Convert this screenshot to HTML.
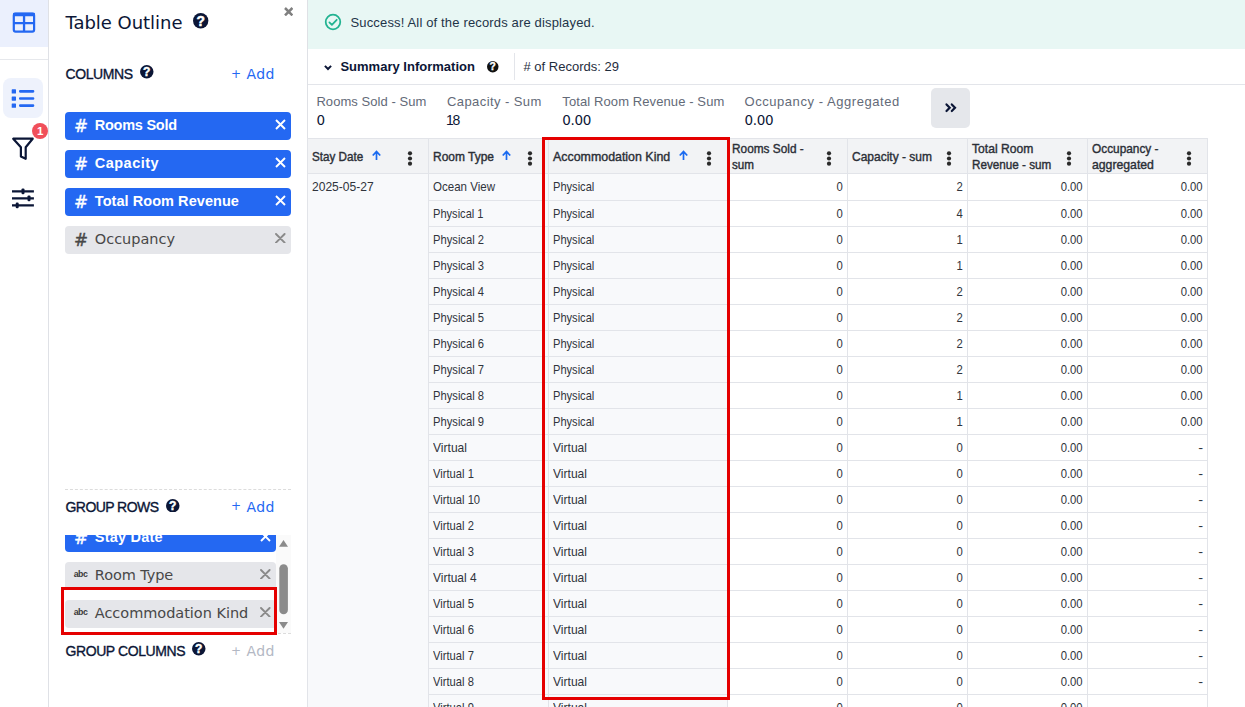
<!DOCTYPE html>
<html lang="en"><head><meta charset="utf-8"><title>Table Outline</title>
<style>
*{box-sizing:border-box;margin:0;padding:0}
html,body{width:1245px;height:707px;overflow:hidden;background:#fff}
body{position:relative;font-family:"Liberation Sans",sans-serif;color:#0b1636}
.abs{position:absolute}
.pp{font-family:"DejaVu Sans","Liberation Sans",sans-serif}
/* left rail */
#rail{position:absolute;left:0;top:0;width:49px;height:707px;background:#fff;border-right:1px solid #dfe1e6}
#railtop{position:absolute;left:0;top:0;width:48px;height:47px;background:#ebf0fd}
#railsep{position:absolute;left:0;top:59px;width:48px;height:1px;background:#e6e8ec}
#railsel{position:absolute;left:3px;top:78px;width:40px;height:40px;border-radius:8px;background:#eef2fc}
/* outline panel */
#panel{position:absolute;left:49px;top:0;width:259px;height:707px;background:#fff;border-right:1px solid #dfe1e6}
.pill{position:absolute;left:65px;width:226px;height:28px;border-radius:4px;background:#2468f2;color:#fff;font-weight:bold;font-size:14.5px;line-height:28px}
.pill.gr{background:#e5e6ea;color:#3f434d;font-weight:normal}
.pill .h{position:absolute;left:10px;top:0;font-weight:bold}
.pill .t{position:absolute;left:29px;top:0;white-space:nowrap}
.pill svg.x{position:absolute;right:6px;top:7px}
.sect{position:absolute;left:65px;font-size:14.5px;color:#0b1636;white-space:nowrap}
.add{position:absolute;left:231px;font-size:14.5px;color:#2468f2;white-space:nowrap}
/* main */
#banner{position:absolute;left:308px;top:0;width:937px;height:49px;background:#e8f7f4}
#banner .t{position:absolute;left:42px;top:14px;font-size:13px;color:#20303c;white-space:nowrap}
.lbl{position:absolute;font-size:13px;color:#5a6170;white-space:nowrap}
.val{position:absolute;font-size:14.5px;color:#0b1636;white-space:nowrap}
/* table */
.c{position:absolute;height:25px;line-height:25px;font-size:12.2px;color:#1d2433;white-space:nowrap;padding:0 4px}
.c.g{background:#f8f9fb}
.c.n{text-align:right;padding-right:8px;background:#fff}
.th{position:absolute;top:140px;height:33px;background:#f5f6f8;font-size:12.2px;font-weight:bold;color:#1d2433;padding-left:4px;line-height:15px}
.th span{position:absolute;left:4px;white-space:nowrap}
.hl{position:absolute;background:#e3e5ea}
.dots{position:absolute;width:4px;height:14px}
</style></head><body>

<!-- ===== LEFT RAIL ===== -->
<div id="rail">
 <div id="railtop"></div>
 <div id="railsep"></div>
 <div id="railsel"></div>
 <svg style="position:absolute;left:10px;top:10px" width="28" height="26" viewBox="10 10 28 26"><rect x="13.8" y="13.7" width="20.3" height="17.9" rx="1.8" fill="none" stroke="#2468f2" stroke-width="2.2"/><rect x="13" y="12.8" width="22" height="3.4" rx="1" fill="#2468f2"/><path d="M13.8 23.05H34.2M24.05 13.7V31.6" stroke="#2468f2" stroke-width="2.3"/></svg>
<svg style="position:absolute;left:10px;top:86px" width="28" height="24" viewBox="10 86 28 24"><g fill="#2468f2"><rect x="11.7" y="89.3" width="4.3" height="4.3" rx="0.6"/><rect x="11.7" y="96.4" width="4.3" height="4.3" rx="0.6"/><rect x="11.7" y="103.5" width="4.3" height="4.3" rx="0.6"/><rect x="19" y="90.1" width="15.3" height="2.6" rx="1.1"/><rect x="19" y="97.2" width="15.3" height="2.6" rx="1.1"/><rect x="19" y="104.3" width="15.3" height="2.6" rx="1.1"/></g></svg>
<svg style="position:absolute;left:8px;top:130px" width="32" height="34" viewBox="8 130 32 34"><path d="M13.2 138.7H32.7L25.7 147.2V158.8L20.9 156.4V147.2Z" fill="none" stroke="#0b1636" stroke-width="2.2" stroke-linejoin="round" stroke-linecap="round"/></svg>
<div style="position:absolute;left:32.2px;top:123.2px;width:15.6px;height:15.6px;border-radius:8px;background:#f04f5a"></div>
<div style="position:absolute;left:37px;top:120.92px;line-height:20px;white-space:nowrap;font-family:'Liberation Sans',sans-serif;font-size:11.5px;font-weight:bold;color:#fff;">1</div>
<svg style="position:absolute;left:10px;top:186px" width="28" height="24" viewBox="10 186 28 24"><g stroke="#0b1636" stroke-width="2.3" fill="none"><path d="M12 191.3H33.9M12 198.3H33.9M12 205.4H33.9"/></g><g fill="#0b1636"><rect x="21.5" y="188.4" width="3" height="5.8" rx="1.2"/><rect x="27.5" y="195.4" width="3" height="5.8" rx="1.2"/><rect x="15.7" y="202.5" width="3" height="5.8" rx="1.2"/></g></svg>
</div>

<!-- ===== OUTLINE PANEL ===== -->
<div id="panel"></div>
<div style="position:absolute;left:65.5px;top:12.56px;line-height:20px;white-space:nowrap;font-family:'DejaVu Sans','Liberation Sans',sans-serif;font-size:18px;color:#0b1636;letter-spacing:-0.033px;">Table Outline</div>
<svg style="position:absolute;left:193.20000000000002px;top:13.2px" width="15.4" height="15.4" viewBox="0 0 16 16"><circle cx="8" cy="8" r="8" fill="#0b1636"/><text x="8" y="13.1" text-anchor="middle" font-family="Liberation Sans,sans-serif" font-weight="bold" font-size="14.3" fill="#fff" stroke="#fff" stroke-width="0.5">?</text></svg>
<svg style="position:absolute;left:283.8px;top:6.8px" width="9.4" height="9.4" viewBox="-4.7 -4.7 9.4 9.4"><path d="M-3.7 -3.7L3.7 3.7M3.7 -3.7L-3.7 3.7" stroke="#808080" stroke-width="2.5" fill="none" stroke-linecap="butt"/></svg>
<div style="position:absolute;left:65.5px;top:64.15px;line-height:20px;white-space:nowrap;font-family:'Liberation Sans',sans-serif;font-size:14px;color:#0b1636;letter-spacing:-0.419px;-webkit-text-stroke:0.35px #0b1636;">COLUMNS</div>
<svg style="position:absolute;left:140.25px;top:65.25px" width="13.5" height="13.5" viewBox="0 0 16 16"><circle cx="8" cy="8" r="8" fill="#0b1636"/><text x="8" y="13.1" text-anchor="middle" font-family="Liberation Sans,sans-serif" font-weight="bold" font-size="14.3" fill="#fff" stroke="#fff" stroke-width="0.5">?</text></svg>
<div style="position:absolute;left:231px;top:63.54px;line-height:20px;white-space:nowrap;font-family:'DejaVu Sans','Liberation Sans',sans-serif;font-size:12px;color:#2468f2;">+</div>
<div style="position:absolute;left:246.6px;top:64.15px;line-height:20px;white-space:nowrap;font-family:'DejaVu Sans','Liberation Sans',sans-serif;font-size:14px;color:#2468f2;letter-spacing:0.345px;">Add</div>
<div style="position:absolute;left:65px;top:112px;width:226px;height:28px;border-radius:4px;background:#2468f2"></div><div style="position:absolute;left:73.9px;top:115.78px;line-height:20px;white-space:nowrap;font-family:'DejaVu Sans','Liberation Sans',sans-serif;font-size:16.8px;color:#fff;-webkit-text-stroke:0.4px #fff;">#</div><div style="position:absolute;left:94.8px;top:115.18px;line-height:20px;white-space:nowrap;font-family:'Liberation Sans',sans-serif;font-size:14.5px;font-weight:bold;color:#fff;letter-spacing:-0.255px;">Rooms Sold</div><svg style="position:absolute;left:274.8px;top:118.8px" width="11" height="11" viewBox="-5.5 -5.5 11 11"><path d="M-4.5 -4.5L4.5 4.5M4.5 -4.5L-4.5 4.5" stroke="#fff" stroke-width="1.9" fill="none" stroke-linecap="butt"/></svg>
<div style="position:absolute;left:65px;top:150px;width:226px;height:28px;border-radius:4px;background:#2468f2"></div><div style="position:absolute;left:73.9px;top:153.78px;line-height:20px;white-space:nowrap;font-family:'DejaVu Sans','Liberation Sans',sans-serif;font-size:16.8px;color:#fff;-webkit-text-stroke:0.4px #fff;">#</div><div style="position:absolute;left:94.8px;top:153.18px;line-height:20px;white-space:nowrap;font-family:'Liberation Sans',sans-serif;font-size:14.5px;font-weight:bold;color:#fff;letter-spacing:0.478px;">Capacity</div><svg style="position:absolute;left:274.8px;top:156.8px" width="11" height="11" viewBox="-5.5 -5.5 11 11"><path d="M-4.5 -4.5L4.5 4.5M4.5 -4.5L-4.5 4.5" stroke="#fff" stroke-width="1.9" fill="none" stroke-linecap="butt"/></svg>
<div style="position:absolute;left:65px;top:188px;width:226px;height:28px;border-radius:4px;background:#2468f2"></div><div style="position:absolute;left:73.9px;top:191.78px;line-height:20px;white-space:nowrap;font-family:'DejaVu Sans','Liberation Sans',sans-serif;font-size:16.8px;color:#fff;-webkit-text-stroke:0.4px #fff;">#</div><div style="position:absolute;left:94.8px;top:191.18px;line-height:20px;white-space:nowrap;font-family:'Liberation Sans',sans-serif;font-size:14.5px;font-weight:bold;color:#fff;letter-spacing:0.056px;">Total Room Revenue</div><svg style="position:absolute;left:274.8px;top:194.8px" width="11" height="11" viewBox="-5.5 -5.5 11 11"><path d="M-4.5 -4.5L4.5 4.5M4.5 -4.5L-4.5 4.5" stroke="#fff" stroke-width="1.9" fill="none" stroke-linecap="butt"/></svg>
<div style="position:absolute;left:65px;top:226px;width:226px;height:28px;border-radius:4px;background:#e5e6ea"></div><div style="position:absolute;left:73.9px;top:229.78px;line-height:20px;white-space:nowrap;font-family:'DejaVu Sans','Liberation Sans',sans-serif;font-size:16.8px;color:#484848;-webkit-text-stroke:0.4px #484848;">#</div><div style="position:absolute;left:94.8px;top:229.18px;line-height:20px;white-space:nowrap;font-family:'DejaVu Sans','Liberation Sans',sans-serif;font-size:14.5px;color:#484848;letter-spacing:-0.011px;">Occupancy</div><svg style="position:absolute;left:275.0px;top:232.6px" width="10.6" height="10.6" viewBox="-5.3 -5.3 10.6 10.6"><path d="M-4.3 -4.3L4.3 4.3M4.3 -4.3L-4.3 4.3" stroke="#8a8a8a" stroke-width="1.9" fill="none" stroke-linecap="round"/></svg>
<div style="position:absolute;left:65px;top:489px;width:226px;height:0;border-top:1px dashed #dcdcdc"></div>
<div style="position:absolute;left:65px;top:633px;width:226px;height:0;border-top:1px dashed #dcdcdc"></div>
<div style="position:absolute;left:65.5px;top:496.85px;line-height:20px;white-space:nowrap;font-family:'Liberation Sans',sans-serif;font-size:14px;color:#0b1636;letter-spacing:-0.559px;-webkit-text-stroke:0.35px #0b1636;">GROUP ROWS</div>
<svg style="position:absolute;left:166.25px;top:498.55px" width="13.5" height="13.5" viewBox="0 0 16 16"><circle cx="8" cy="8" r="8" fill="#0b1636"/><text x="8" y="13.1" text-anchor="middle" font-family="Liberation Sans,sans-serif" font-weight="bold" font-size="14.3" fill="#fff" stroke="#fff" stroke-width="0.5">?</text></svg>
<div style="position:absolute;left:231px;top:496.24px;line-height:20px;white-space:nowrap;font-family:'DejaVu Sans','Liberation Sans',sans-serif;font-size:12px;color:#2468f2;">+</div>
<div style="position:absolute;left:246.6px;top:496.85px;line-height:20px;white-space:nowrap;font-family:'DejaVu Sans','Liberation Sans',sans-serif;font-size:14px;color:#2468f2;letter-spacing:0.345px;">Add</div>
<div style="position:absolute;left:0;top:535px;width:300px;height:98px;overflow:hidden"><div style="position:absolute;left:0;top:-535px">
<div style="position:absolute;left:65px;top:524px;width:211px;height:28px;border-radius:4px;background:#2468f2"></div><div style="position:absolute;left:73.9px;top:527.78px;line-height:20px;white-space:nowrap;font-family:'DejaVu Sans','Liberation Sans',sans-serif;font-size:16.8px;color:#fff;-webkit-text-stroke:0.4px #fff;">#</div><div style="position:absolute;left:94.8px;top:527.18px;line-height:20px;white-space:nowrap;font-family:'Liberation Sans',sans-serif;font-size:14.5px;font-weight:bold;color:#fff;letter-spacing:0.213px;">Stay Date</div><svg style="position:absolute;left:259.8px;top:530.8px" width="11" height="11" viewBox="-5.5 -5.5 11 11"><path d="M-4.5 -4.5L4.5 4.5M4.5 -4.5L-4.5 4.5" stroke="#fff" stroke-width="1.9" fill="none" stroke-linecap="butt"/></svg>
<div style="position:absolute;left:65px;top:562px;width:211px;height:28px;border-radius:4px;background:#e5e6ea"></div><div style="position:absolute;left:73.7px;top:564.35px;line-height:20px;white-space:nowrap;font-family:'Liberation Sans',sans-serif;font-size:8.8px;font-weight:bold;color:#3a3a3a;letter-spacing:-0.486px;">abc</div><div style="position:absolute;left:94.8px;top:565.18px;line-height:20px;white-space:nowrap;font-family:'DejaVu Sans','Liberation Sans',sans-serif;font-size:14.5px;color:#484848;letter-spacing:-0.09px;">Room Type</div><svg style="position:absolute;left:260.0px;top:568.6px" width="10.6" height="10.6" viewBox="-5.3 -5.3 10.6 10.6"><path d="M-4.3 -4.3L4.3 4.3M4.3 -4.3L-4.3 4.3" stroke="#8a8a8a" stroke-width="1.9" fill="none" stroke-linecap="round"/></svg>
</div></div>
<div style="position:absolute;left:276px;top:535px;width:15px;height:98px;background:#fafafa"></div>
<svg style="position:absolute;left:276px;top:535px" width="15" height="98" viewBox="0 0 15 98"><path d="M3 11.8L7.5 5L12 11.8Z" fill="#8b8b8b"/><path d="M3 87L7.5 93.8L12 87Z" fill="#8b8b8b"/><rect x="3.3" y="29.3" width="8.6" height="50" rx="4.3" fill="#8b8b8b"/></svg>
<div style="position:absolute;left:61px;top:587px;width:216px;height:47.5px;border:3px solid #e50000;background:#fff"></div>
<div style="position:absolute;left:0;top:590px;width:274px;height:41.5px;overflow:hidden"><div style="position:absolute;left:0;top:-590px">
<div style="position:absolute;left:65px;top:600px;width:211px;height:28px;border-radius:4px;background:#e5e6ea"></div><div style="position:absolute;left:73.7px;top:602.35px;line-height:20px;white-space:nowrap;font-family:'Liberation Sans',sans-serif;font-size:8.8px;font-weight:bold;color:#3a3a3a;letter-spacing:-0.486px;">abc</div><div style="position:absolute;left:94.8px;top:603.18px;line-height:20px;white-space:nowrap;font-family:'DejaVu Sans','Liberation Sans',sans-serif;font-size:14.5px;color:#484848;letter-spacing:-0.03px;">Accommodation Kind</div><svg style="position:absolute;left:260.0px;top:606.6px" width="10.6" height="10.6" viewBox="-5.3 -5.3 10.6 10.6"><path d="M-4.3 -4.3L4.3 4.3M4.3 -4.3L-4.3 4.3" stroke="#8a8a8a" stroke-width="1.9" fill="none" stroke-linecap="round"/></svg>
</div></div>
<div style="position:absolute;left:65.5px;top:641.15px;line-height:20px;white-space:nowrap;font-family:'Liberation Sans',sans-serif;font-size:14px;color:#0b1636;letter-spacing:-0.415px;-webkit-text-stroke:0.35px #0b1636;">GROUP COLUMNS</div>
<svg style="position:absolute;left:192.25px;top:642.15px" width="13.5" height="13.5" viewBox="0 0 16 16"><circle cx="8" cy="8" r="8" fill="#0b1636"/><text x="8" y="13.1" text-anchor="middle" font-family="Liberation Sans,sans-serif" font-weight="bold" font-size="14.3" fill="#fff" stroke="#fff" stroke-width="0.5">?</text></svg>
<div style="position:absolute;left:231px;top:640.54px;line-height:20px;white-space:nowrap;font-family:'DejaVu Sans','Liberation Sans',sans-serif;font-size:12px;color:#b3b8c4;">+</div>
<div style="position:absolute;left:246.6px;top:641.15px;line-height:20px;white-space:nowrap;font-family:'DejaVu Sans','Liberation Sans',sans-serif;font-size:14px;color:#b3b8c4;letter-spacing:0.345px;">Add</div>

<!-- ===== MAIN ===== -->
<div id="banner"></div>
<svg style="position:absolute;left:324px;top:12.5px" width="18" height="18" viewBox="0 0 18 18"><circle cx="9" cy="9" r="7.3" fill="none" stroke="#22b391" stroke-width="1.75"/><path d="M5.4 9.4L7.9 11.9L12.7 6.8" fill="none" stroke="#22b391" stroke-width="1.75" stroke-linecap="round" stroke-linejoin="round"/></svg>
<div style="position:absolute;left:350.5px;top:12.80px;line-height:20px;white-space:nowrap;font-family:'Liberation Sans',sans-serif;font-size:13px;color:#1e3448;letter-spacing:0.153px;">Success! All of the records are displayed.</div>
<svg style="position:absolute;left:322.6px;top:62.5px" width="10" height="9" viewBox="0 0 10 9"><path d="M1.9 2.9L5 6L8.1 2.9" fill="none" stroke="#0b1636" stroke-width="2"/></svg>
<div style="position:absolute;left:340.4px;top:57.10px;line-height:20px;white-space:nowrap;font-family:'Liberation Sans',sans-serif;font-size:13px;font-weight:bold;color:#0b1636;letter-spacing:0.008px;">Summary Information</div>
<svg style="position:absolute;left:487.45px;top:61.45px" width="11.5" height="11.5" viewBox="0 0 16 16"><circle cx="8" cy="8" r="8" fill="#111"/><text x="8" y="13.1" text-anchor="middle" font-family="Liberation Sans,sans-serif" font-weight="bold" font-size="14.3" fill="#fff" stroke="#fff" stroke-width="0.5">?</text></svg>
<div style="position:absolute;left:514px;top:53px;width:1px;height:27px;background:#e3e5ea"></div>
<div style="position:absolute;left:523.5px;top:57.10px;line-height:20px;white-space:nowrap;font-family:'Liberation Sans',sans-serif;font-size:13px;color:#1f2d3d;letter-spacing:0.014px;"># of Records: 29</div>
<div style="position:absolute;left:308px;top:84px;width:937px;height:1px;background:#e3e5ea"></div>
<div style="position:absolute;left:316.4px;top:92.10px;line-height:20px;white-space:nowrap;font-family:'Liberation Sans',sans-serif;font-size:13px;color:#636a78;letter-spacing:0.06px;">Rooms Sold - Sum</div>
<div style="position:absolute;left:316.4px;top:109.92px;line-height:20px;white-space:nowrap;font-family:'DejaVu Sans','Liberation Sans',sans-serif;font-size:13.5px;color:#0b1636;">0</div>
<div style="position:absolute;left:447px;top:92.10px;line-height:20px;white-space:nowrap;font-family:'Liberation Sans',sans-serif;font-size:13px;color:#636a78;letter-spacing:0.417px;">Capacity - Sum</div>
<div style="position:absolute;left:446px;top:109.75px;line-height:20px;white-space:nowrap;font-family:'Liberation Sans',sans-serif;font-size:14px;color:#0b1636;letter-spacing:-1.2px;">18</div>
<div style="position:absolute;left:562.3px;top:92.10px;line-height:20px;white-space:nowrap;font-family:'Liberation Sans',sans-serif;font-size:13px;color:#636a78;letter-spacing:0.101px;">Total Room Revenue - Sum</div>
<div style="position:absolute;left:562.3px;top:109.92px;line-height:20px;white-space:nowrap;font-family:'DejaVu Sans','Liberation Sans',sans-serif;font-size:13.5px;color:#0b1636;letter-spacing:-0.354px;">0.00</div>
<div style="position:absolute;left:744.5px;top:92.10px;line-height:20px;white-space:nowrap;font-family:'Liberation Sans',sans-serif;font-size:13px;color:#636a78;letter-spacing:0.553px;">Occupancy - Aggregated</div>
<div style="position:absolute;left:744.5px;top:109.92px;line-height:20px;white-space:nowrap;font-family:'DejaVu Sans','Liberation Sans',sans-serif;font-size:13.5px;color:#0b1636;letter-spacing:-0.354px;">0.00</div>
<div style="position:absolute;left:931px;top:88px;width:39px;height:40px;border-radius:5px;background:#e5e7eb"></div>
<svg style="position:absolute;left:943px;top:101px" width="16" height="14" viewBox="943 101 16 14"><path d="M946.5 104.4L949.7 107.7L946.5 111M951.8 104.4L955 107.7L951.8 111" fill="none" stroke="#0b1636" stroke-width="2.2" stroke-linecap="round" stroke-linejoin="miter"/></svg>

<!-- ===== TABLE ===== -->
<div style="position:absolute;left:307px;top:138px;width:901px;height:35px;background:#f2f3f5"></div>
<div style="position:absolute;left:307px;top:173px;width:420px;height:534px;background:#f8f9fb"></div>
<div style="position:absolute;left:307px;top:138px;width:901px;height:1px;background:#e2e4e9"></div>
<div style="position:absolute;left:307px;top:173px;width:901px;height:1px;background:#e2e4e9"></div>
<div style="position:absolute;left:428px;top:200px;width:780px;height:1px;background:#e2e4e9"></div>
<div style="position:absolute;left:428px;top:226px;width:780px;height:1px;background:#e2e4e9"></div>
<div style="position:absolute;left:428px;top:252px;width:780px;height:1px;background:#e2e4e9"></div>
<div style="position:absolute;left:428px;top:278px;width:780px;height:1px;background:#e2e4e9"></div>
<div style="position:absolute;left:428px;top:304px;width:780px;height:1px;background:#e2e4e9"></div>
<div style="position:absolute;left:428px;top:330px;width:780px;height:1px;background:#e2e4e9"></div>
<div style="position:absolute;left:428px;top:356px;width:780px;height:1px;background:#e2e4e9"></div>
<div style="position:absolute;left:428px;top:382px;width:780px;height:1px;background:#e2e4e9"></div>
<div style="position:absolute;left:428px;top:408px;width:780px;height:1px;background:#e2e4e9"></div>
<div style="position:absolute;left:428px;top:434px;width:780px;height:1px;background:#e2e4e9"></div>
<div style="position:absolute;left:428px;top:460px;width:780px;height:1px;background:#e2e4e9"></div>
<div style="position:absolute;left:428px;top:486px;width:780px;height:1px;background:#e2e4e9"></div>
<div style="position:absolute;left:428px;top:512px;width:780px;height:1px;background:#e2e4e9"></div>
<div style="position:absolute;left:428px;top:538px;width:780px;height:1px;background:#e2e4e9"></div>
<div style="position:absolute;left:428px;top:564px;width:780px;height:1px;background:#e2e4e9"></div>
<div style="position:absolute;left:428px;top:590px;width:780px;height:1px;background:#e2e4e9"></div>
<div style="position:absolute;left:428px;top:616px;width:780px;height:1px;background:#e2e4e9"></div>
<div style="position:absolute;left:428px;top:642px;width:780px;height:1px;background:#e2e4e9"></div>
<div style="position:absolute;left:428px;top:668px;width:780px;height:1px;background:#e2e4e9"></div>
<div style="position:absolute;left:428px;top:694px;width:780px;height:1px;background:#e2e4e9"></div>
<div style="position:absolute;left:307px;top:138px;width:1px;height:569px;background:#e2e4e9"></div>
<div style="position:absolute;left:428px;top:138px;width:1px;height:569px;background:#e2e4e9"></div>
<div style="position:absolute;left:548px;top:138px;width:1px;height:569px;background:#e2e4e9"></div>
<div style="position:absolute;left:727px;top:138px;width:1px;height:569px;background:#e2e4e9"></div>
<div style="position:absolute;left:847px;top:138px;width:1px;height:569px;background:#e2e4e9"></div>
<div style="position:absolute;left:967px;top:138px;width:1px;height:569px;background:#e2e4e9"></div>
<div style="position:absolute;left:1087px;top:138px;width:1px;height:569px;background:#e2e4e9"></div>
<div style="position:absolute;left:1207px;top:138px;width:1px;height:569px;background:#e2e4e9"></div>
<div style="position:absolute;left:312.2px;top:146.79px;line-height:20px;white-space:nowrap;font-family:'Liberation Sans',sans-serif;font-size:12.15px;color:#2b2f37;transform:scaleX(0.9604);transform-origin:left center;-webkit-text-stroke:0.38px #2b2f37;">Stay Date</div>
<svg style="position:absolute;left:371.2px;top:150.0px" width="11" height="11" viewBox="-5.5 -5.5 11 11"><path d="M0 4.4V-3.9M-3.75 0L0 -3.9L3.75 0" fill="none" stroke="#1a6af0" stroke-width="1.7"/></svg>
<svg style="position:absolute;left:407px;top:150.2px" width="6" height="17" viewBox="0 0 6 17"><circle cx="3" cy="3.3" r="2.1" fill="#2a2a2a"/><circle cx="3" cy="8.5" r="2.1" fill="#2a2a2a"/><circle cx="3" cy="13.7" r="2.1" fill="#2a2a2a"/></svg>
<div style="position:absolute;left:432.9px;top:146.79px;line-height:20px;white-space:nowrap;font-family:'Liberation Sans',sans-serif;font-size:12.15px;color:#2b2f37;transform:scaleX(0.9861);transform-origin:left center;-webkit-text-stroke:0.38px #2b2f37;">Room Type</div>
<svg style="position:absolute;left:501.3px;top:150.0px" width="11" height="11" viewBox="-5.5 -5.5 11 11"><path d="M0 4.4V-3.9M-3.75 0L0 -3.9L3.75 0" fill="none" stroke="#1a6af0" stroke-width="1.7"/></svg>
<svg style="position:absolute;left:526.9px;top:150.2px" width="6" height="17" viewBox="0 0 6 17"><circle cx="3" cy="3.3" r="2.1" fill="#2a2a2a"/><circle cx="3" cy="8.5" r="2.1" fill="#2a2a2a"/><circle cx="3" cy="13.7" r="2.1" fill="#2a2a2a"/></svg>
<div style="position:absolute;left:552.9px;top:146.79px;line-height:20px;white-space:nowrap;font-family:'Liberation Sans',sans-serif;font-size:12.15px;color:#2b2f37;transform:scaleX(1.0215);transform-origin:left center;-webkit-text-stroke:0.38px #2b2f37;">Accommodation Kind</div>
<svg style="position:absolute;left:678.0px;top:150.0px" width="11" height="11" viewBox="-5.5 -5.5 11 11"><path d="M0 4.4V-3.9M-3.75 0L0 -3.9L3.75 0" fill="none" stroke="#1a6af0" stroke-width="1.7"/></svg>
<svg style="position:absolute;left:705.7px;top:150.2px" width="6" height="17" viewBox="0 0 6 17"><circle cx="3" cy="3.3" r="2.1" fill="#2a2a2a"/><circle cx="3" cy="8.5" r="2.1" fill="#2a2a2a"/><circle cx="3" cy="13.7" r="2.1" fill="#2a2a2a"/></svg>
<div style="position:absolute;left:732px;top:139.19px;line-height:20px;white-space:nowrap;font-family:'Liberation Sans',sans-serif;font-size:12.15px;color:#2b2f37;transform:scaleX(0.9749);transform-origin:left center;-webkit-text-stroke:0.38px #2b2f37;">Rooms Sold -</div>
<div style="position:absolute;left:732px;top:154.99px;line-height:20px;white-space:nowrap;font-family:'Liberation Sans',sans-serif;font-size:12.15px;color:#2b2f37;transform:scaleX(0.9591);transform-origin:left center;-webkit-text-stroke:0.38px #2b2f37;">sum</div>
<svg style="position:absolute;left:825.8px;top:150.2px" width="6" height="17" viewBox="0 0 6 17"><circle cx="3" cy="3.3" r="2.1" fill="#2a2a2a"/><circle cx="3" cy="8.5" r="2.1" fill="#2a2a2a"/><circle cx="3" cy="13.7" r="2.1" fill="#2a2a2a"/></svg>
<div style="position:absolute;left:851.7px;top:146.79px;line-height:20px;white-space:nowrap;font-family:'Liberation Sans',sans-serif;font-size:12.15px;color:#2b2f37;transform:scaleX(0.988);transform-origin:left center;-webkit-text-stroke:0.38px #2b2f37;">Capacity - sum</div>
<svg style="position:absolute;left:946.3px;top:150.2px" width="6" height="17" viewBox="0 0 6 17"><circle cx="3" cy="3.3" r="2.1" fill="#2a2a2a"/><circle cx="3" cy="8.5" r="2.1" fill="#2a2a2a"/><circle cx="3" cy="13.7" r="2.1" fill="#2a2a2a"/></svg>
<div style="position:absolute;left:972px;top:139.19px;line-height:20px;white-space:nowrap;font-family:'Liberation Sans',sans-serif;font-size:12.15px;color:#2b2f37;transform:scaleX(0.9983);transform-origin:left center;-webkit-text-stroke:0.38px #2b2f37;">Total Room</div>
<div style="position:absolute;left:972px;top:154.99px;line-height:20px;white-space:nowrap;font-family:'Liberation Sans',sans-serif;font-size:12.15px;color:#2b2f37;transform:scaleX(0.9632);transform-origin:left center;-webkit-text-stroke:0.38px #2b2f37;">Revenue - sum</div>
<svg style="position:absolute;left:1065.8px;top:150.2px" width="6" height="17" viewBox="0 0 6 17"><circle cx="3" cy="3.3" r="2.1" fill="#2a2a2a"/><circle cx="3" cy="8.5" r="2.1" fill="#2a2a2a"/><circle cx="3" cy="13.7" r="2.1" fill="#2a2a2a"/></svg>
<div style="position:absolute;left:1091.9px;top:139.19px;line-height:20px;white-space:nowrap;font-family:'Liberation Sans',sans-serif;font-size:12.15px;color:#2b2f37;transform:scaleX(0.9757);transform-origin:left center;-webkit-text-stroke:0.38px #2b2f37;">Occupancy -</div>
<div style="position:absolute;left:1091.9px;top:154.99px;line-height:20px;white-space:nowrap;font-family:'Liberation Sans',sans-serif;font-size:12.15px;color:#2b2f37;transform:scaleX(1.0075);transform-origin:left center;-webkit-text-stroke:0.38px #2b2f37;">aggregated</div>
<svg style="position:absolute;left:1186.3px;top:150.2px" width="6" height="17" viewBox="0 0 6 17"><circle cx="3" cy="3.3" r="2.1" fill="#2a2a2a"/><circle cx="3" cy="8.5" r="2.1" fill="#2a2a2a"/><circle cx="3" cy="13.7" r="2.1" fill="#2a2a2a"/></svg>
<div style="position:absolute;left:312.2px;top:176.79px;line-height:20px;white-space:nowrap;font-family:'Liberation Sans',sans-serif;font-size:12.15px;color:#30343c;transform:scaleX(0.9934);transform-origin:left center;">2025-05-27</div>
<div style="position:absolute;left:433px;top:176.79px;line-height:20px;white-space:nowrap;font-family:'Liberation Sans',sans-serif;font-size:12.15px;color:#30343c;transform:scaleX(0.9502);transform-origin:left center;">Ocean View</div>
<div style="position:absolute;left:552.9px;top:176.79px;line-height:20px;white-space:nowrap;font-family:'Liberation Sans',sans-serif;font-size:12.15px;color:#30343c;transform:scaleX(0.9133);transform-origin:left center;">Physical</div>
<div style="position:absolute;right:402.29999999999995px;top:176.79px;line-height:20px;white-space:nowrap;font-family:'Liberation Sans',sans-serif;font-size:12.15px;color:#30343c;transform:scaleX(0.93);transform-origin:right center;">0</div>
<div style="position:absolute;right:282.29999999999995px;top:176.79px;line-height:20px;white-space:nowrap;font-family:'Liberation Sans',sans-serif;font-size:12.15px;color:#30343c;transform:scaleX(0.93);transform-origin:right center;">2</div>
<div style="position:absolute;right:162.29999999999995px;top:176.79px;line-height:20px;white-space:nowrap;font-family:'Liberation Sans',sans-serif;font-size:12.15px;color:#30343c;transform:scaleX(0.93);transform-origin:right center;">0.00</div>
<div style="position:absolute;right:42.299999999999955px;top:176.79px;line-height:20px;white-space:nowrap;font-family:'Liberation Sans',sans-serif;font-size:12.15px;color:#30343c;transform:scaleX(0.93);transform-origin:right center;">0.00</div>
<div style="position:absolute;left:433px;top:203.79px;line-height:20px;white-space:nowrap;font-family:'Liberation Sans',sans-serif;font-size:12.15px;color:#30343c;transform:scaleX(0.9125);transform-origin:left center;">Physical 1</div>
<div style="position:absolute;left:552.9px;top:203.79px;line-height:20px;white-space:nowrap;font-family:'Liberation Sans',sans-serif;font-size:12.15px;color:#30343c;transform:scaleX(0.9133);transform-origin:left center;">Physical</div>
<div style="position:absolute;right:402.29999999999995px;top:203.79px;line-height:20px;white-space:nowrap;font-family:'Liberation Sans',sans-serif;font-size:12.15px;color:#30343c;transform:scaleX(0.93);transform-origin:right center;">0</div>
<div style="position:absolute;right:282.29999999999995px;top:203.79px;line-height:20px;white-space:nowrap;font-family:'Liberation Sans',sans-serif;font-size:12.15px;color:#30343c;transform:scaleX(0.93);transform-origin:right center;">4</div>
<div style="position:absolute;right:162.29999999999995px;top:203.79px;line-height:20px;white-space:nowrap;font-family:'Liberation Sans',sans-serif;font-size:12.15px;color:#30343c;transform:scaleX(0.93);transform-origin:right center;">0.00</div>
<div style="position:absolute;right:42.299999999999955px;top:203.79px;line-height:20px;white-space:nowrap;font-family:'Liberation Sans',sans-serif;font-size:12.15px;color:#30343c;transform:scaleX(0.93);transform-origin:right center;">0.00</div>
<div style="position:absolute;left:433px;top:229.79px;line-height:20px;white-space:nowrap;font-family:'Liberation Sans',sans-serif;font-size:12.15px;color:#30343c;transform:scaleX(0.922);transform-origin:left center;">Physical 2</div>
<div style="position:absolute;left:552.9px;top:229.79px;line-height:20px;white-space:nowrap;font-family:'Liberation Sans',sans-serif;font-size:12.15px;color:#30343c;transform:scaleX(0.9133);transform-origin:left center;">Physical</div>
<div style="position:absolute;right:402.29999999999995px;top:229.79px;line-height:20px;white-space:nowrap;font-family:'Liberation Sans',sans-serif;font-size:12.15px;color:#30343c;transform:scaleX(0.93);transform-origin:right center;">0</div>
<div style="position:absolute;right:282.29999999999995px;top:229.79px;line-height:20px;white-space:nowrap;font-family:'Liberation Sans',sans-serif;font-size:12.15px;color:#30343c;transform:scaleX(0.93);transform-origin:right center;">1</div>
<div style="position:absolute;right:162.29999999999995px;top:229.79px;line-height:20px;white-space:nowrap;font-family:'Liberation Sans',sans-serif;font-size:12.15px;color:#30343c;transform:scaleX(0.93);transform-origin:right center;">0.00</div>
<div style="position:absolute;right:42.299999999999955px;top:229.79px;line-height:20px;white-space:nowrap;font-family:'Liberation Sans',sans-serif;font-size:12.15px;color:#30343c;transform:scaleX(0.93);transform-origin:right center;">0.00</div>
<div style="position:absolute;left:433px;top:255.79px;line-height:20px;white-space:nowrap;font-family:'Liberation Sans',sans-serif;font-size:12.15px;color:#30343c;transform:scaleX(0.922);transform-origin:left center;">Physical 3</div>
<div style="position:absolute;left:552.9px;top:255.79px;line-height:20px;white-space:nowrap;font-family:'Liberation Sans',sans-serif;font-size:12.15px;color:#30343c;transform:scaleX(0.9133);transform-origin:left center;">Physical</div>
<div style="position:absolute;right:402.29999999999995px;top:255.79px;line-height:20px;white-space:nowrap;font-family:'Liberation Sans',sans-serif;font-size:12.15px;color:#30343c;transform:scaleX(0.93);transform-origin:right center;">0</div>
<div style="position:absolute;right:282.29999999999995px;top:255.79px;line-height:20px;white-space:nowrap;font-family:'Liberation Sans',sans-serif;font-size:12.15px;color:#30343c;transform:scaleX(0.93);transform-origin:right center;">1</div>
<div style="position:absolute;right:162.29999999999995px;top:255.79px;line-height:20px;white-space:nowrap;font-family:'Liberation Sans',sans-serif;font-size:12.15px;color:#30343c;transform:scaleX(0.93);transform-origin:right center;">0.00</div>
<div style="position:absolute;right:42.299999999999955px;top:255.79px;line-height:20px;white-space:nowrap;font-family:'Liberation Sans',sans-serif;font-size:12.15px;color:#30343c;transform:scaleX(0.93);transform-origin:right center;">0.00</div>
<div style="position:absolute;left:433px;top:281.79px;line-height:20px;white-space:nowrap;font-family:'Liberation Sans',sans-serif;font-size:12.15px;color:#30343c;transform:scaleX(0.922);transform-origin:left center;">Physical 4</div>
<div style="position:absolute;left:552.9px;top:281.79px;line-height:20px;white-space:nowrap;font-family:'Liberation Sans',sans-serif;font-size:12.15px;color:#30343c;transform:scaleX(0.9133);transform-origin:left center;">Physical</div>
<div style="position:absolute;right:402.29999999999995px;top:281.79px;line-height:20px;white-space:nowrap;font-family:'Liberation Sans',sans-serif;font-size:12.15px;color:#30343c;transform:scaleX(0.93);transform-origin:right center;">0</div>
<div style="position:absolute;right:282.29999999999995px;top:281.79px;line-height:20px;white-space:nowrap;font-family:'Liberation Sans',sans-serif;font-size:12.15px;color:#30343c;transform:scaleX(0.93);transform-origin:right center;">2</div>
<div style="position:absolute;right:162.29999999999995px;top:281.79px;line-height:20px;white-space:nowrap;font-family:'Liberation Sans',sans-serif;font-size:12.15px;color:#30343c;transform:scaleX(0.93);transform-origin:right center;">0.00</div>
<div style="position:absolute;right:42.299999999999955px;top:281.79px;line-height:20px;white-space:nowrap;font-family:'Liberation Sans',sans-serif;font-size:12.15px;color:#30343c;transform:scaleX(0.93);transform-origin:right center;">0.00</div>
<div style="position:absolute;left:433px;top:307.79px;line-height:20px;white-space:nowrap;font-family:'Liberation Sans',sans-serif;font-size:12.15px;color:#30343c;transform:scaleX(0.922);transform-origin:left center;">Physical 5</div>
<div style="position:absolute;left:552.9px;top:307.79px;line-height:20px;white-space:nowrap;font-family:'Liberation Sans',sans-serif;font-size:12.15px;color:#30343c;transform:scaleX(0.9133);transform-origin:left center;">Physical</div>
<div style="position:absolute;right:402.29999999999995px;top:307.79px;line-height:20px;white-space:nowrap;font-family:'Liberation Sans',sans-serif;font-size:12.15px;color:#30343c;transform:scaleX(0.93);transform-origin:right center;">0</div>
<div style="position:absolute;right:282.29999999999995px;top:307.79px;line-height:20px;white-space:nowrap;font-family:'Liberation Sans',sans-serif;font-size:12.15px;color:#30343c;transform:scaleX(0.93);transform-origin:right center;">2</div>
<div style="position:absolute;right:162.29999999999995px;top:307.79px;line-height:20px;white-space:nowrap;font-family:'Liberation Sans',sans-serif;font-size:12.15px;color:#30343c;transform:scaleX(0.93);transform-origin:right center;">0.00</div>
<div style="position:absolute;right:42.299999999999955px;top:307.79px;line-height:20px;white-space:nowrap;font-family:'Liberation Sans',sans-serif;font-size:12.15px;color:#30343c;transform:scaleX(0.93);transform-origin:right center;">0.00</div>
<div style="position:absolute;left:433px;top:333.79px;line-height:20px;white-space:nowrap;font-family:'Liberation Sans',sans-serif;font-size:12.15px;color:#30343c;transform:scaleX(0.922);transform-origin:left center;">Physical 6</div>
<div style="position:absolute;left:552.9px;top:333.79px;line-height:20px;white-space:nowrap;font-family:'Liberation Sans',sans-serif;font-size:12.15px;color:#30343c;transform:scaleX(0.9133);transform-origin:left center;">Physical</div>
<div style="position:absolute;right:402.29999999999995px;top:333.79px;line-height:20px;white-space:nowrap;font-family:'Liberation Sans',sans-serif;font-size:12.15px;color:#30343c;transform:scaleX(0.93);transform-origin:right center;">0</div>
<div style="position:absolute;right:282.29999999999995px;top:333.79px;line-height:20px;white-space:nowrap;font-family:'Liberation Sans',sans-serif;font-size:12.15px;color:#30343c;transform:scaleX(0.93);transform-origin:right center;">2</div>
<div style="position:absolute;right:162.29999999999995px;top:333.79px;line-height:20px;white-space:nowrap;font-family:'Liberation Sans',sans-serif;font-size:12.15px;color:#30343c;transform:scaleX(0.93);transform-origin:right center;">0.00</div>
<div style="position:absolute;right:42.299999999999955px;top:333.79px;line-height:20px;white-space:nowrap;font-family:'Liberation Sans',sans-serif;font-size:12.15px;color:#30343c;transform:scaleX(0.93);transform-origin:right center;">0.00</div>
<div style="position:absolute;left:433px;top:359.79px;line-height:20px;white-space:nowrap;font-family:'Liberation Sans',sans-serif;font-size:12.15px;color:#30343c;transform:scaleX(0.922);transform-origin:left center;">Physical 7</div>
<div style="position:absolute;left:552.9px;top:359.79px;line-height:20px;white-space:nowrap;font-family:'Liberation Sans',sans-serif;font-size:12.15px;color:#30343c;transform:scaleX(0.9133);transform-origin:left center;">Physical</div>
<div style="position:absolute;right:402.29999999999995px;top:359.79px;line-height:20px;white-space:nowrap;font-family:'Liberation Sans',sans-serif;font-size:12.15px;color:#30343c;transform:scaleX(0.93);transform-origin:right center;">0</div>
<div style="position:absolute;right:282.29999999999995px;top:359.79px;line-height:20px;white-space:nowrap;font-family:'Liberation Sans',sans-serif;font-size:12.15px;color:#30343c;transform:scaleX(0.93);transform-origin:right center;">2</div>
<div style="position:absolute;right:162.29999999999995px;top:359.79px;line-height:20px;white-space:nowrap;font-family:'Liberation Sans',sans-serif;font-size:12.15px;color:#30343c;transform:scaleX(0.93);transform-origin:right center;">0.00</div>
<div style="position:absolute;right:42.299999999999955px;top:359.79px;line-height:20px;white-space:nowrap;font-family:'Liberation Sans',sans-serif;font-size:12.15px;color:#30343c;transform:scaleX(0.93);transform-origin:right center;">0.00</div>
<div style="position:absolute;left:433px;top:385.79px;line-height:20px;white-space:nowrap;font-family:'Liberation Sans',sans-serif;font-size:12.15px;color:#30343c;transform:scaleX(0.922);transform-origin:left center;">Physical 8</div>
<div style="position:absolute;left:552.9px;top:385.79px;line-height:20px;white-space:nowrap;font-family:'Liberation Sans',sans-serif;font-size:12.15px;color:#30343c;transform:scaleX(0.9133);transform-origin:left center;">Physical</div>
<div style="position:absolute;right:402.29999999999995px;top:385.79px;line-height:20px;white-space:nowrap;font-family:'Liberation Sans',sans-serif;font-size:12.15px;color:#30343c;transform:scaleX(0.93);transform-origin:right center;">0</div>
<div style="position:absolute;right:282.29999999999995px;top:385.79px;line-height:20px;white-space:nowrap;font-family:'Liberation Sans',sans-serif;font-size:12.15px;color:#30343c;transform:scaleX(0.93);transform-origin:right center;">1</div>
<div style="position:absolute;right:162.29999999999995px;top:385.79px;line-height:20px;white-space:nowrap;font-family:'Liberation Sans',sans-serif;font-size:12.15px;color:#30343c;transform:scaleX(0.93);transform-origin:right center;">0.00</div>
<div style="position:absolute;right:42.299999999999955px;top:385.79px;line-height:20px;white-space:nowrap;font-family:'Liberation Sans',sans-serif;font-size:12.15px;color:#30343c;transform:scaleX(0.93);transform-origin:right center;">0.00</div>
<div style="position:absolute;left:433px;top:411.79px;line-height:20px;white-space:nowrap;font-family:'Liberation Sans',sans-serif;font-size:12.15px;color:#30343c;transform:scaleX(0.922);transform-origin:left center;">Physical 9</div>
<div style="position:absolute;left:552.9px;top:411.79px;line-height:20px;white-space:nowrap;font-family:'Liberation Sans',sans-serif;font-size:12.15px;color:#30343c;transform:scaleX(0.9133);transform-origin:left center;">Physical</div>
<div style="position:absolute;right:402.29999999999995px;top:411.79px;line-height:20px;white-space:nowrap;font-family:'Liberation Sans',sans-serif;font-size:12.15px;color:#30343c;transform:scaleX(0.93);transform-origin:right center;">0</div>
<div style="position:absolute;right:282.29999999999995px;top:411.79px;line-height:20px;white-space:nowrap;font-family:'Liberation Sans',sans-serif;font-size:12.15px;color:#30343c;transform:scaleX(0.93);transform-origin:right center;">1</div>
<div style="position:absolute;right:162.29999999999995px;top:411.79px;line-height:20px;white-space:nowrap;font-family:'Liberation Sans',sans-serif;font-size:12.15px;color:#30343c;transform:scaleX(0.93);transform-origin:right center;">0.00</div>
<div style="position:absolute;right:42.299999999999955px;top:411.79px;line-height:20px;white-space:nowrap;font-family:'Liberation Sans',sans-serif;font-size:12.15px;color:#30343c;transform:scaleX(0.93);transform-origin:right center;">0.00</div>
<div style="position:absolute;left:433px;top:437.79px;line-height:20px;white-space:nowrap;font-family:'Liberation Sans',sans-serif;font-size:12.15px;color:#30343c;transform:scaleX(0.9941);transform-origin:left center;">Virtual</div>
<div style="position:absolute;left:552.9px;top:437.79px;line-height:20px;white-space:nowrap;font-family:'Liberation Sans',sans-serif;font-size:12.15px;color:#30343c;transform:scaleX(0.9941);transform-origin:left center;">Virtual</div>
<div style="position:absolute;right:402.29999999999995px;top:437.79px;line-height:20px;white-space:nowrap;font-family:'Liberation Sans',sans-serif;font-size:12.15px;color:#30343c;transform:scaleX(0.93);transform-origin:right center;">0</div>
<div style="position:absolute;right:282.29999999999995px;top:437.79px;line-height:20px;white-space:nowrap;font-family:'Liberation Sans',sans-serif;font-size:12.15px;color:#30343c;transform:scaleX(0.93);transform-origin:right center;">0</div>
<div style="position:absolute;right:162.29999999999995px;top:437.79px;line-height:20px;white-space:nowrap;font-family:'Liberation Sans',sans-serif;font-size:12.15px;color:#30343c;transform:scaleX(0.93);transform-origin:right center;">0.00</div>
<div style="position:absolute;right:42.299999999999955px;top:437.79px;line-height:20px;white-space:nowrap;font-family:'Liberation Sans',sans-serif;font-size:12.15px;color:#30343c;transform:scaleX(1.2);transform-origin:right center;">-</div>
<div style="position:absolute;left:433px;top:463.79px;line-height:20px;white-space:nowrap;font-family:'Liberation Sans',sans-serif;font-size:12.15px;color:#30343c;transform:scaleX(0.922);transform-origin:left center;">Virtual 1</div>
<div style="position:absolute;left:552.9px;top:463.79px;line-height:20px;white-space:nowrap;font-family:'Liberation Sans',sans-serif;font-size:12.15px;color:#30343c;transform:scaleX(0.9941);transform-origin:left center;">Virtual</div>
<div style="position:absolute;right:402.29999999999995px;top:463.79px;line-height:20px;white-space:nowrap;font-family:'Liberation Sans',sans-serif;font-size:12.15px;color:#30343c;transform:scaleX(0.93);transform-origin:right center;">0</div>
<div style="position:absolute;right:282.29999999999995px;top:463.79px;line-height:20px;white-space:nowrap;font-family:'Liberation Sans',sans-serif;font-size:12.15px;color:#30343c;transform:scaleX(0.93);transform-origin:right center;">0</div>
<div style="position:absolute;right:162.29999999999995px;top:463.79px;line-height:20px;white-space:nowrap;font-family:'Liberation Sans',sans-serif;font-size:12.15px;color:#30343c;transform:scaleX(0.93);transform-origin:right center;">0.00</div>
<div style="position:absolute;right:42.299999999999955px;top:463.79px;line-height:20px;white-space:nowrap;font-family:'Liberation Sans',sans-serif;font-size:12.15px;color:#30343c;transform:scaleX(1.2);transform-origin:right center;">-</div>
<div style="position:absolute;left:433px;top:489.79px;line-height:20px;white-space:nowrap;font-family:'Liberation Sans',sans-serif;font-size:12.15px;color:#30343c;transform:scaleX(0.922);transform-origin:left center;">Virtual 10</div>
<div style="position:absolute;left:552.9px;top:489.79px;line-height:20px;white-space:nowrap;font-family:'Liberation Sans',sans-serif;font-size:12.15px;color:#30343c;transform:scaleX(0.9941);transform-origin:left center;">Virtual</div>
<div style="position:absolute;right:402.29999999999995px;top:489.79px;line-height:20px;white-space:nowrap;font-family:'Liberation Sans',sans-serif;font-size:12.15px;color:#30343c;transform:scaleX(0.93);transform-origin:right center;">0</div>
<div style="position:absolute;right:282.29999999999995px;top:489.79px;line-height:20px;white-space:nowrap;font-family:'Liberation Sans',sans-serif;font-size:12.15px;color:#30343c;transform:scaleX(0.93);transform-origin:right center;">0</div>
<div style="position:absolute;right:162.29999999999995px;top:489.79px;line-height:20px;white-space:nowrap;font-family:'Liberation Sans',sans-serif;font-size:12.15px;color:#30343c;transform:scaleX(0.93);transform-origin:right center;">0.00</div>
<div style="position:absolute;right:42.299999999999955px;top:489.79px;line-height:20px;white-space:nowrap;font-family:'Liberation Sans',sans-serif;font-size:12.15px;color:#30343c;transform:scaleX(1.2);transform-origin:right center;">-</div>
<div style="position:absolute;left:433px;top:515.79px;line-height:20px;white-space:nowrap;font-family:'Liberation Sans',sans-serif;font-size:12.15px;color:#30343c;transform:scaleX(0.922);transform-origin:left center;">Virtual 2</div>
<div style="position:absolute;left:552.9px;top:515.79px;line-height:20px;white-space:nowrap;font-family:'Liberation Sans',sans-serif;font-size:12.15px;color:#30343c;transform:scaleX(0.9941);transform-origin:left center;">Virtual</div>
<div style="position:absolute;right:402.29999999999995px;top:515.79px;line-height:20px;white-space:nowrap;font-family:'Liberation Sans',sans-serif;font-size:12.15px;color:#30343c;transform:scaleX(0.93);transform-origin:right center;">0</div>
<div style="position:absolute;right:282.29999999999995px;top:515.79px;line-height:20px;white-space:nowrap;font-family:'Liberation Sans',sans-serif;font-size:12.15px;color:#30343c;transform:scaleX(0.93);transform-origin:right center;">0</div>
<div style="position:absolute;right:162.29999999999995px;top:515.79px;line-height:20px;white-space:nowrap;font-family:'Liberation Sans',sans-serif;font-size:12.15px;color:#30343c;transform:scaleX(0.93);transform-origin:right center;">0.00</div>
<div style="position:absolute;right:42.299999999999955px;top:515.79px;line-height:20px;white-space:nowrap;font-family:'Liberation Sans',sans-serif;font-size:12.15px;color:#30343c;transform:scaleX(1.2);transform-origin:right center;">-</div>
<div style="position:absolute;left:433px;top:541.79px;line-height:20px;white-space:nowrap;font-family:'Liberation Sans',sans-serif;font-size:12.15px;color:#30343c;transform:scaleX(0.922);transform-origin:left center;">Virtual 3</div>
<div style="position:absolute;left:552.9px;top:541.79px;line-height:20px;white-space:nowrap;font-family:'Liberation Sans',sans-serif;font-size:12.15px;color:#30343c;transform:scaleX(0.9941);transform-origin:left center;">Virtual</div>
<div style="position:absolute;right:402.29999999999995px;top:541.79px;line-height:20px;white-space:nowrap;font-family:'Liberation Sans',sans-serif;font-size:12.15px;color:#30343c;transform:scaleX(0.93);transform-origin:right center;">0</div>
<div style="position:absolute;right:282.29999999999995px;top:541.79px;line-height:20px;white-space:nowrap;font-family:'Liberation Sans',sans-serif;font-size:12.15px;color:#30343c;transform:scaleX(0.93);transform-origin:right center;">0</div>
<div style="position:absolute;right:162.29999999999995px;top:541.79px;line-height:20px;white-space:nowrap;font-family:'Liberation Sans',sans-serif;font-size:12.15px;color:#30343c;transform:scaleX(0.93);transform-origin:right center;">0.00</div>
<div style="position:absolute;right:42.299999999999955px;top:541.79px;line-height:20px;white-space:nowrap;font-family:'Liberation Sans',sans-serif;font-size:12.15px;color:#30343c;transform:scaleX(1.2);transform-origin:right center;">-</div>
<div style="position:absolute;left:433px;top:567.79px;line-height:20px;white-space:nowrap;font-family:'Liberation Sans',sans-serif;font-size:12.15px;color:#30343c;transform:scaleX(0.9836);transform-origin:left center;">Virtual 4</div>
<div style="position:absolute;left:552.9px;top:567.79px;line-height:20px;white-space:nowrap;font-family:'Liberation Sans',sans-serif;font-size:12.15px;color:#30343c;transform:scaleX(0.9941);transform-origin:left center;">Virtual</div>
<div style="position:absolute;right:402.29999999999995px;top:567.79px;line-height:20px;white-space:nowrap;font-family:'Liberation Sans',sans-serif;font-size:12.15px;color:#30343c;transform:scaleX(0.93);transform-origin:right center;">0</div>
<div style="position:absolute;right:282.29999999999995px;top:567.79px;line-height:20px;white-space:nowrap;font-family:'Liberation Sans',sans-serif;font-size:12.15px;color:#30343c;transform:scaleX(0.93);transform-origin:right center;">0</div>
<div style="position:absolute;right:162.29999999999995px;top:567.79px;line-height:20px;white-space:nowrap;font-family:'Liberation Sans',sans-serif;font-size:12.15px;color:#30343c;transform:scaleX(0.93);transform-origin:right center;">0.00</div>
<div style="position:absolute;right:42.299999999999955px;top:567.79px;line-height:20px;white-space:nowrap;font-family:'Liberation Sans',sans-serif;font-size:12.15px;color:#30343c;transform:scaleX(1.2);transform-origin:right center;">-</div>
<div style="position:absolute;left:433px;top:593.79px;line-height:20px;white-space:nowrap;font-family:'Liberation Sans',sans-serif;font-size:12.15px;color:#30343c;transform:scaleX(0.922);transform-origin:left center;">Virtual 5</div>
<div style="position:absolute;left:552.9px;top:593.79px;line-height:20px;white-space:nowrap;font-family:'Liberation Sans',sans-serif;font-size:12.15px;color:#30343c;transform:scaleX(0.9941);transform-origin:left center;">Virtual</div>
<div style="position:absolute;right:402.29999999999995px;top:593.79px;line-height:20px;white-space:nowrap;font-family:'Liberation Sans',sans-serif;font-size:12.15px;color:#30343c;transform:scaleX(0.93);transform-origin:right center;">0</div>
<div style="position:absolute;right:282.29999999999995px;top:593.79px;line-height:20px;white-space:nowrap;font-family:'Liberation Sans',sans-serif;font-size:12.15px;color:#30343c;transform:scaleX(0.93);transform-origin:right center;">0</div>
<div style="position:absolute;right:162.29999999999995px;top:593.79px;line-height:20px;white-space:nowrap;font-family:'Liberation Sans',sans-serif;font-size:12.15px;color:#30343c;transform:scaleX(0.93);transform-origin:right center;">0.00</div>
<div style="position:absolute;right:42.299999999999955px;top:593.79px;line-height:20px;white-space:nowrap;font-family:'Liberation Sans',sans-serif;font-size:12.15px;color:#30343c;transform:scaleX(1.2);transform-origin:right center;">-</div>
<div style="position:absolute;left:433px;top:619.79px;line-height:20px;white-space:nowrap;font-family:'Liberation Sans',sans-serif;font-size:12.15px;color:#30343c;transform:scaleX(0.922);transform-origin:left center;">Virtual 6</div>
<div style="position:absolute;left:552.9px;top:619.79px;line-height:20px;white-space:nowrap;font-family:'Liberation Sans',sans-serif;font-size:12.15px;color:#30343c;transform:scaleX(0.9941);transform-origin:left center;">Virtual</div>
<div style="position:absolute;right:402.29999999999995px;top:619.79px;line-height:20px;white-space:nowrap;font-family:'Liberation Sans',sans-serif;font-size:12.15px;color:#30343c;transform:scaleX(0.93);transform-origin:right center;">0</div>
<div style="position:absolute;right:282.29999999999995px;top:619.79px;line-height:20px;white-space:nowrap;font-family:'Liberation Sans',sans-serif;font-size:12.15px;color:#30343c;transform:scaleX(0.93);transform-origin:right center;">0</div>
<div style="position:absolute;right:162.29999999999995px;top:619.79px;line-height:20px;white-space:nowrap;font-family:'Liberation Sans',sans-serif;font-size:12.15px;color:#30343c;transform:scaleX(0.93);transform-origin:right center;">0.00</div>
<div style="position:absolute;right:42.299999999999955px;top:619.79px;line-height:20px;white-space:nowrap;font-family:'Liberation Sans',sans-serif;font-size:12.15px;color:#30343c;transform:scaleX(1.2);transform-origin:right center;">-</div>
<div style="position:absolute;left:433px;top:645.79px;line-height:20px;white-space:nowrap;font-family:'Liberation Sans',sans-serif;font-size:12.15px;color:#30343c;transform:scaleX(0.922);transform-origin:left center;">Virtual 7</div>
<div style="position:absolute;left:552.9px;top:645.79px;line-height:20px;white-space:nowrap;font-family:'Liberation Sans',sans-serif;font-size:12.15px;color:#30343c;transform:scaleX(0.9941);transform-origin:left center;">Virtual</div>
<div style="position:absolute;right:402.29999999999995px;top:645.79px;line-height:20px;white-space:nowrap;font-family:'Liberation Sans',sans-serif;font-size:12.15px;color:#30343c;transform:scaleX(0.93);transform-origin:right center;">0</div>
<div style="position:absolute;right:282.29999999999995px;top:645.79px;line-height:20px;white-space:nowrap;font-family:'Liberation Sans',sans-serif;font-size:12.15px;color:#30343c;transform:scaleX(0.93);transform-origin:right center;">0</div>
<div style="position:absolute;right:162.29999999999995px;top:645.79px;line-height:20px;white-space:nowrap;font-family:'Liberation Sans',sans-serif;font-size:12.15px;color:#30343c;transform:scaleX(0.93);transform-origin:right center;">0.00</div>
<div style="position:absolute;right:42.299999999999955px;top:645.79px;line-height:20px;white-space:nowrap;font-family:'Liberation Sans',sans-serif;font-size:12.15px;color:#30343c;transform:scaleX(1.2);transform-origin:right center;">-</div>
<div style="position:absolute;left:433px;top:671.79px;line-height:20px;white-space:nowrap;font-family:'Liberation Sans',sans-serif;font-size:12.15px;color:#30343c;transform:scaleX(0.922);transform-origin:left center;">Virtual 8</div>
<div style="position:absolute;left:552.9px;top:671.79px;line-height:20px;white-space:nowrap;font-family:'Liberation Sans',sans-serif;font-size:12.15px;color:#30343c;transform:scaleX(0.9941);transform-origin:left center;">Virtual</div>
<div style="position:absolute;right:402.29999999999995px;top:671.79px;line-height:20px;white-space:nowrap;font-family:'Liberation Sans',sans-serif;font-size:12.15px;color:#30343c;transform:scaleX(0.93);transform-origin:right center;">0</div>
<div style="position:absolute;right:282.29999999999995px;top:671.79px;line-height:20px;white-space:nowrap;font-family:'Liberation Sans',sans-serif;font-size:12.15px;color:#30343c;transform:scaleX(0.93);transform-origin:right center;">0</div>
<div style="position:absolute;right:162.29999999999995px;top:671.79px;line-height:20px;white-space:nowrap;font-family:'Liberation Sans',sans-serif;font-size:12.15px;color:#30343c;transform:scaleX(0.93);transform-origin:right center;">0.00</div>
<div style="position:absolute;right:42.299999999999955px;top:671.79px;line-height:20px;white-space:nowrap;font-family:'Liberation Sans',sans-serif;font-size:12.15px;color:#30343c;transform:scaleX(1.2);transform-origin:right center;">-</div>
<div style="position:absolute;left:433px;top:697.79px;line-height:20px;white-space:nowrap;font-family:'Liberation Sans',sans-serif;font-size:12.15px;color:#30343c;transform:scaleX(0.922);transform-origin:left center;">Virtual 9</div>
<div style="position:absolute;left:552.9px;top:697.79px;line-height:20px;white-space:nowrap;font-family:'Liberation Sans',sans-serif;font-size:12.15px;color:#30343c;transform:scaleX(0.9941);transform-origin:left center;">Virtual</div>
<div style="position:absolute;right:402.29999999999995px;top:697.79px;line-height:20px;white-space:nowrap;font-family:'Liberation Sans',sans-serif;font-size:12.15px;color:#30343c;transform:scaleX(0.93);transform-origin:right center;">0</div>
<div style="position:absolute;right:282.29999999999995px;top:697.79px;line-height:20px;white-space:nowrap;font-family:'Liberation Sans',sans-serif;font-size:12.15px;color:#30343c;transform:scaleX(0.93);transform-origin:right center;">0</div>
<div style="position:absolute;right:162.29999999999995px;top:697.79px;line-height:20px;white-space:nowrap;font-family:'Liberation Sans',sans-serif;font-size:12.15px;color:#30343c;transform:scaleX(0.93);transform-origin:right center;">0.00</div>
<div style="position:absolute;right:42.299999999999955px;top:697.79px;line-height:20px;white-space:nowrap;font-family:'Liberation Sans',sans-serif;font-size:12.15px;color:#30343c;transform:scaleX(1.2);transform-origin:right center;">-</div>
<div style="position:absolute;left:542px;top:137px;width:188px;height:563px;border:3px solid #e50000"></div>
</body></html>
